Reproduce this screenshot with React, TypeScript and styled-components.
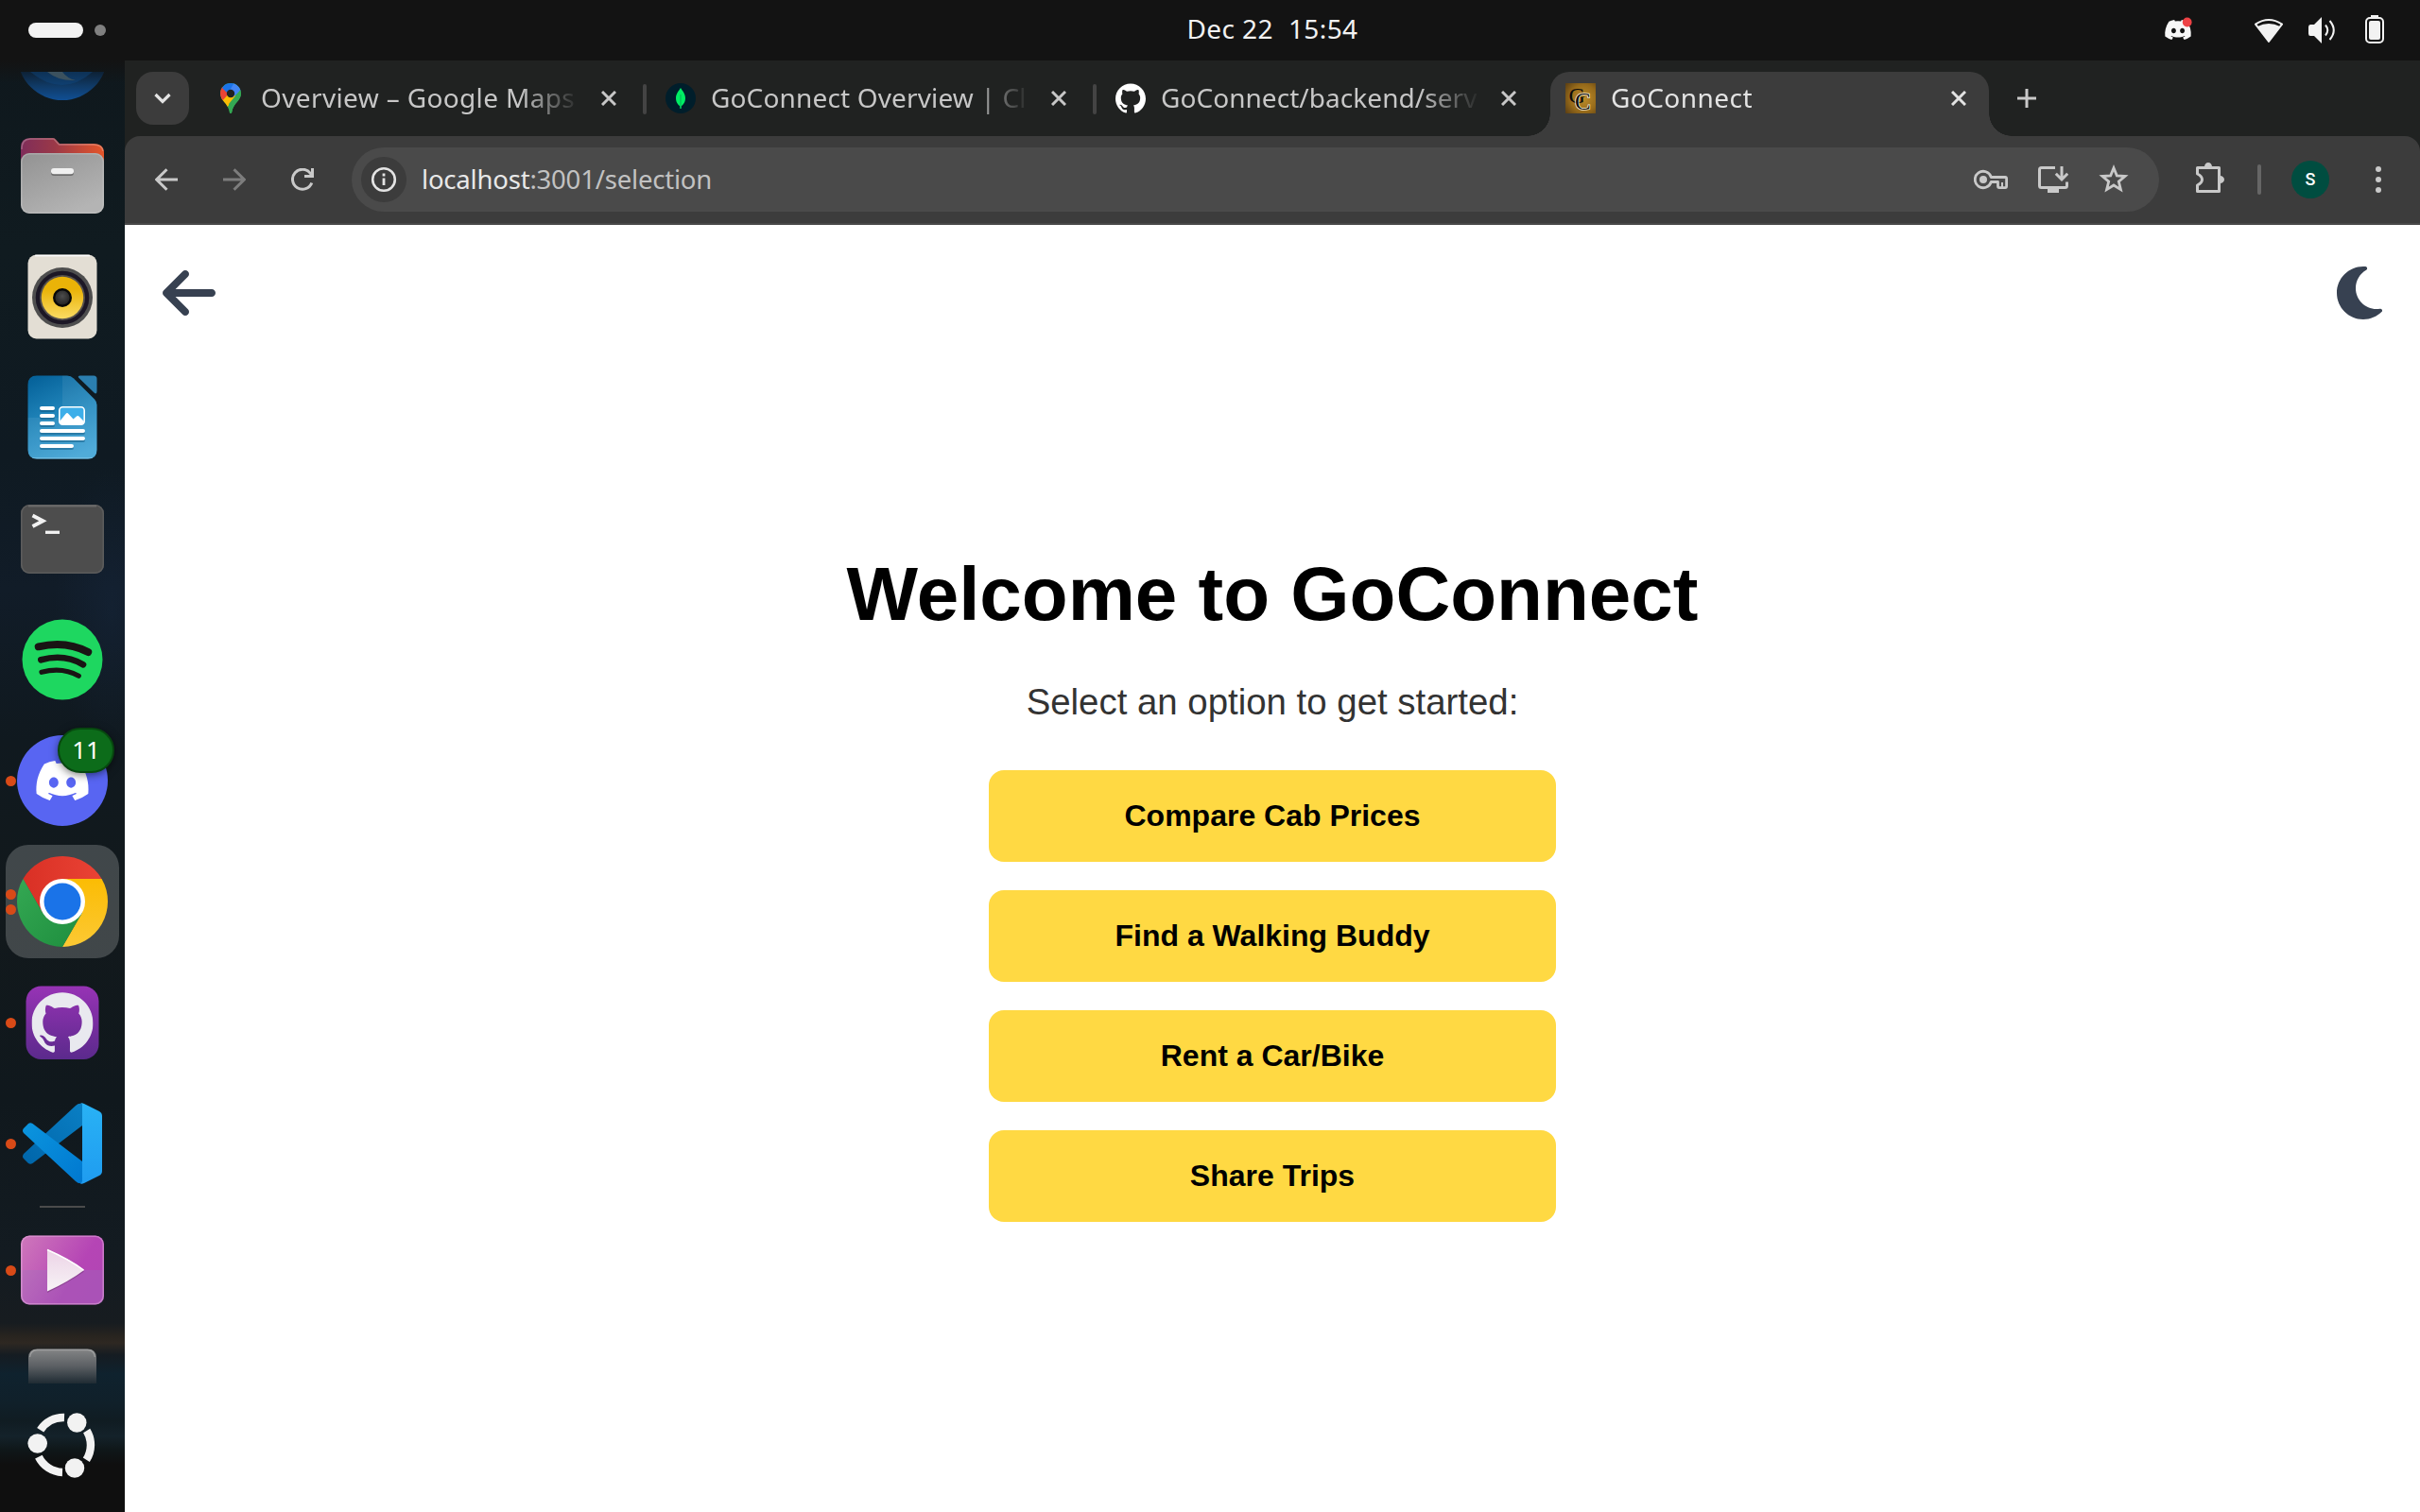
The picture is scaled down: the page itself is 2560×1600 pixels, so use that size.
import React from "react";
import styled, { createGlobalStyle, css } from "styled-components";
import { SiGithub } from "react-icons/si";
import { FaArrowLeft, FaDiscord, FaMoon } from "react-icons/fa6";

const GlobalStyle = createGlobalStyle`
  * { box-sizing: border-box; }
  html, body { margin: 0; padding: 0; background: #131313; }
  svg { display: block; flex: none; }
`;

const uiFont = `"Noto Sans", "Open Sans", sans-serif`;

const Desktop = styled.div`
  width: 2560px;
  height: 1600px;
  display: flex;
  flex-direction: column;
  overflow: hidden;
  font-family: ${uiFont};
`;

/* ---------- system bar ---------- */

const TopBar = styled.header`
  height: 64px;
  flex: none;
  display: grid;
  grid-template-columns: 1fr auto 1fr;
  align-items: center;
  background: #131313;
  color: #f2f2f2;
`;

const Workspaces = styled.div`
  display: flex;
  align-items: center;
  gap: 12px;
  padding-left: 30px;
`;

const WorkspaceMark = styled.span<{ $active?: boolean }>`
  width: ${(p) => (p.$active ? 58 : 12)}px;
  height: ${(p) => (p.$active ? 16 : 12)}px;
  border-radius: 8px;
  background: ${(p) => (p.$active ? "#f2f2f2" : "#808080")};
`;

const Clock = styled.time`
  display: flex;
  gap: 16px;
  padding: 0 0 4px 132px;
  font-size: 28px;
  line-height: 40px;
  letter-spacing: 0.4px;
`;

const Tray = styled.div`
  display: flex;
  justify-content: flex-end;
  align-items: center;
  padding-right: 38px;
`;

const TraySlot = styled.span<{ $gap: number }>`
  display: block;
  margin-left: ${(p) => p.$gap}px;
`;

/* ---------- dock ---------- */

const Workspace = styled.div`
  flex: 1;
  display: flex;
  min-height: 0;
`;

const Dock = styled.nav`
  width: 132px;
  flex: none;
  display: flex;
  flex-direction: column;
  padding-top: 12px;
  background:
    linear-gradient(180deg, #131313 0, rgba(17, 20, 22, 0) 24px),
    radial-gradient(60px 150px at 118px 580px, rgba(24, 42, 68, 0.35), rgba(24, 42, 68, 0)),
    linear-gradient(
      180deg,
      #0f181d 0,
      #101b20 200px,
      #0f1a22 420px,
      #111c28 560px,
      #10191f 720px,
      #12191c 900px,
      #10181d 1100px,
      #131b21 1260px,
      #171c20 1336px,
      #28241f 1350px,
      #2e2822 1357px,
      #151c22 1370px,
      #0f222e 1390px,
      #10202a 1420px,
      #101c22 1440px,
      #14222a 1456px,
      #0f1719 1470px,
      #0f0f0f 1486px,
      #0f0f0f 1536px
    );
`;

const DockScroll = styled.div`
  height: 1388px;
  flex: none;
  overflow: hidden;
`;

const DockList = styled.div`
  display: flex;
  flex-direction: column;
  margin-top: -82px;
`;

const DockCell = styled.div<{ $focused?: boolean }>`
  position: relative;
  height: 128px;
  flex: none;
  padding: 4px 6px;
  ${(p) =>
    p.$focused &&
    css`
      &::before {
        content: "";
        display: block;
        height: 120px;
        border-radius: 24px;
        background: rgba(255, 255, 255, 0.2);
      }
    `}
  > svg {
    position: absolute;
    left: 0;
    top: 0;
  }
`;

const RunningDots = styled.div`
  position: absolute;
  left: 6px;
  top: 0;
  height: 128px;
  display: flex;
  flex-direction: column;
  justify-content: center;
  gap: 5px;
`;

const Dot = styled.span`
  width: 11px;
  height: 11px;
  border-radius: 50%;
  background: #d84a17;
`;

const Badge = styled.span`
  position: absolute;
  left: 61px;
  top: 8px;
  width: 60px;
  height: 48px;
  display: flex;
  align-items: center;
  justify-content: center;
  padding-bottom: 2px;
  border: 2px solid #07480f;
  border-radius: 24px;
  background: #0c6c1a;
  box-shadow: 0 2px 8px rgba(0, 0, 0, 0.5);
  color: #fff;
  font-size: 26px;
  line-height: 30px;
`;

const DockDivider = styled.div`
  height: 6px;
  flex: none;
  padding: 2px 42px;
  &::before {
    content: "";
    display: block;
    height: 2px;
    background: #4a4b4b;
  }
`;

const AppsButton = styled.div`
  flex: 1;
`;

/* ---------- browser ---------- */

const Browser = styled.section`
  flex: 1;
  min-width: 0;
  display: flex;
  flex-direction: column;
  background: #202221;
`;

const TabStrip = styled.div`
  height: 80px;
  flex: none;
  display: flex;
  align-items: flex-start;
  padding: 12px 0 0 12px;
`;

const TabSearch = styled.button`
  width: 56px;
  height: 56px;
  margin: 0 12px 0 0;
  padding: 0;
  border: 0;
  border-radius: 18px;
  background: #3c3c3c;
  display: flex;
  align-items: center;
  justify-content: center;
`;

const Tab = styled.div<{ $active?: boolean }>`
  position: relative;
  width: 464px;
  height: 68px;
  margin-right: 12px;
  padding: 0 8px 12px 16px;
  display: flex;
  align-items: center;
  color: ${(p) => (p.$active ? "#e3e3e3" : "#c7c7c7")};
  ${(p) =>
    p.$active &&
    css`
      background: #3c3c3c;
      border-radius: 20px 20px 0 0;
      &::before,
      &::after {
        content: "";
        position: absolute;
        bottom: 0;
        width: 24px;
        height: 24px;
      }
      &::before {
        left: -24px;
        background: radial-gradient(circle at 0 0, transparent 23.5px, #3c3c3c 24px);
      }
      &::after {
        right: -24px;
        background: radial-gradient(circle at 100% 0, transparent 23.5px, #3c3c3c 24px);
      }
    `}
`;

const TabTitle = styled.span<{ $tracking: number }>`
  width: 334px;
  margin: 0 10px 0 16px;
  padding-bottom: 2px;
  overflow: hidden;
  white-space: nowrap;
  font-size: 28px;
  line-height: 40px;
  letter-spacing: ${(p) => p.$tracking}px;
  mask-image: linear-gradient(90deg, #000 274px, transparent 338px);
`;

const CloseSlot = styled.span`
  width: 48px;
  display: flex;
  justify-content: center;
`;

const TabRule = styled.span`
  position: absolute;
  left: 468px;
  top: 13px;
  width: 4px;
  height: 32px;
  border-radius: 2px;
  background: #444;
`;

const NewTab = styled.span`
  width: 56px;
  height: 56px;
  display: flex;
  align-items: center;
  justify-content: center;
`;

const Toolbar = styled.div`
  height: 94px;
  flex: none;
  display: flex;
  align-items: center;
  padding: 0 0 0 20px;
  background: #3c3c3c;
  border-bottom: 2px solid #484848;
  border-radius: 16px 16px 0 0;
`;

const NavSlot = styled.span<{ $dim?: boolean }>`
  width: 48px;
  margin-right: 24px;
  display: flex;
  justify-content: center;
  color: ${(p) => (p.$dim ? "#7d7d7d" : "#c9c9c9")};
`;

const Omnibox = styled.div`
  width: 1912px;
  height: 68px;
  margin: 0 36px 0 4px;
  display: flex;
  align-items: center;
  border-radius: 34px;
  padding: 0 32px 0 10px;
  background: #4a4a4a;
`;

const InfoChip = styled.span`
  width: 48px;
  height: 48px;
  border-radius: 50%;
  display: flex;
  align-items: center;
  justify-content: center;
  background: #3c3c3c;
`;

const Address = styled.span`
  flex: 1;
  margin-left: 16px;
  padding-bottom: 1px;
  font-size: 27.5px;
  line-height: 40px;
  letter-spacing: -0.2px;
  color: #c2c2c2;
`;

const Host = styled.span`
  color: #e8e8e8;
`;

const OmniActions = styled.div`
  display: grid;
  grid-template-columns: 36px 32px 32px;
  align-items: center;
  column-gap: 32px;
`;

const ToolbarRule = styled.span`
  width: 4px;
  height: 32px;
  margin: 0 32px 0 32px;
  border-radius: 2px;
  background: #666;
`;

const Avatar = styled.span`
  width: 40px;
  height: 40px;
  border-radius: 50%;
  display: flex;
  align-items: center;
  justify-content: center;
  background: #004d40;
  color: #fff;
  font: 500 18px/20px Roboto, sans-serif;
`;

const MenuDots = styled.span`
  width: 6px;
  margin-left: 49px;
  display: flex;
  flex-direction: column;
  gap: 5px;
  &::before,
  &::after,
  i {
    content: "";
    width: 6px;
    height: 6px;
    border-radius: 50%;
    background: #c9c9c9;
  }
`;

/* ---------- page ---------- */

const Page = styled.main`
  flex: 1;
  display: flex;
  flex-direction: column;
  background: #fff;
  font-family: "Liberation Sans", Arial, sans-serif;
`;

const PageHeader = styled.div`
  display: flex;
  justify-content: space-between;
  padding: 40px 40px 0;
  color: #374151;
`;

const BackArrow = styled(FaArrowLeft)`
  width: 56px;
  height: 64px;
`;

const Moon = styled(FaMoon)`
  width: 48px;
  height: 64px;
`;

const Welcome = styled.div`
  display: flex;
  flex-direction: column;
  align-items: center;
  padding-top: 241px;
`;

const Heading = styled.h1`
  margin: 0;
  font-size: 80px;
  line-height: 92px;
  font-weight: 700;
  color: #000;
`;

const Prompt = styled.p`
  margin: 46px 0 0;
  font-size: 38.4px;
  line-height: 44px;
  color: #333;
`;

const Options = styled.div`
  width: 600px;
  display: flex;
  flex-direction: column;
  gap: 30px;
  margin-top: 50px;
`;

const Option = styled.button`
  height: 97px;
  padding: 0;
  border: 0;
  border-radius: 16px;
  background: #ffd943;
  color: #000;
  font: 700 32px/37px "Liberation Sans", Arial, sans-serif;
`;

/* ---------- icons ---------- */

const CloseIcon = () => (
  <svg width="16" height="16" viewBox="0 0 16 16" stroke="currentColor" strokeWidth="3">
    <path d="M1 1l14 14M15 1L1 15" />
  </svg>
);

const MapsIcon = () => (
  <svg width="32" height="32" viewBox="0 0 32 32">
    <defs>
      <clipPath id="pin">
        <path d="M16 0c6.200 0 11 4.800 11 11 0 7.500-8.200 9.800-9.700 19.500-.3 2-2.300 2-2.600 0C13.200 20.800 5 18.500 5 11 5 4.800 9.800 0 16 0z" />
      </clipPath>
    </defs>
    <g clipPath="url(#pin)">
      <path fill="#34a853" d="M0 0h32v32H0z" />
      <path fill="#fbbc04" d="M0 22L13 6l9 8L10 28z" />
      <path fill="#ea4335" d="M0 4h8l7 6-9 10-6-4z" />
      <path fill="#1a73e8" d="M7 5L12-2l9 2-8 11z" />
      <path fill="#4285f4" d="M19.500 0L28 5l-2 4-8 6-5-4z" />
      <path fill="#34a853" d="M26.300 7L30 20 16 32 14 22z" />
    </g>
    <circle cx="16" cy="11" r="4.200" fill="#202221" />
  </svg>
);

const MongoIcon = () => (
  <svg width="32" height="32" viewBox="0 0 32 32">
    <circle cx="16" cy="16" r="16" fill="#001e2b" />
    <path fill="#00ed64" d="M16 5c1.500 3 5 5.500 5 11 0 4.500-2.500 7-4.200 8.300L16.600 27h-1.200l-.2-2.700C13.500 23 11 20.500 11 16c0-5.500 3.500-8 5-11z" />
    <path stroke="#00a651" strokeWidth=".8" d="M16 12v14" />
  </svg>
);

const GoConnectIcon = () => (
  <svg width="32" height="32" viewBox="0 0 32 32">
    <defs>
      <radialGradient id="gold" cx=".6" cy=".5" r=".75">
        <stop offset="0" stopColor="#bd8d2b" />
        <stop offset=".6" stopColor="#966a1a" />
        <stop offset="1" stopColor="#5e4114" />
      </radialGradient>
    </defs>
    <path fill="url(#gold)" d="M0 0h32v32H0z" />
    <text fontFamily="Liberation Serif, serif" fill="#0b0b0b" paintOrder="stroke">
      <tspan x="3.500" y="20.500" fontSize="24">G</tspan>
      <tspan x="10" y="28" fontSize="25" stroke="#f6ecd6" strokeWidth="1.600">C</tspan>
    </text>
  </svg>
);

const ArrowIcon = ({ flip }: { flip?: boolean }) => (
  <svg width="24" height="24" viewBox="0 0 24 24" fill="none" stroke="currentColor" strokeWidth="3">
    <path d={flip ? "M0 12h22M11.500 1.200L22.300 12 11.500 22.800" : "M24 12H2M12.500 1.200L1.700 12l10.800 10.800"} />
  </svg>
);

const ReloadIcon = () => (
  <svg width="24" height="24" viewBox="0 0 24 24" fill="none" stroke="currentColor" strokeWidth="3">
    <path d="M21.800 15.500A10.500 10.500 0 1 1 20.300 5.300L22 7.500" />
    <path d="M22.500 0v8.500H14" />
  </svg>
);

const InfoIcon = () => (
  <svg width="28" height="28" viewBox="0 0 28 28" fill="none" stroke="#e3e3e3">
    <circle cx="14" cy="14" r="11.800" strokeWidth="2.600" />
    <path strokeWidth="2.800" d="M14 12.500V20M14 7.600v2.800" />
  </svg>
);

const KeyIcon = () => (
  <svg width="36" height="32" viewBox="2 0 36 32" fill="none" stroke="#c9c9c9" strokeWidth="2.800">
    <path strokeLinejoin="round" d="M20.300 13.500A8.700 8.700 0 1 0 20.300 18.500H27.500V23Q27.500 24.600 29 24.600H35.200Q36.600 24.600 36.600 23V15Q36.600 13.500 35.200 13.500Z" />
    <circle cx="12" cy="16" r="4" fill="#c9c9c9" stroke="none" />
    <path strokeWidth="2" d="M32 19v5" />
  </svg>
);

const InstallIcon = () => (
  <svg width="32" height="32" viewBox="0 0 32 32" fill="none" stroke="#c9c9c9" strokeWidth="3">
    <path d="M18 3.500H3.500Q1.500 3.500 1.500 5.500V22.500Q1.500 24.500 3.500 24.500H28.500Q30.500 24.500 30.500 22.500V18.500" />
    <path d="M10 26h12v4H10z" fill="#c9c9c9" stroke="none" />
    <path d="M25 2v13M18.800 9.800L25 16l6.200-6.200" />
  </svg>
);

const StarIcon = () => (
  <svg width="32" height="32" viewBox="0 0 32 32" fill="none" stroke="#c9c9c9" strokeWidth="2.800">
    <path d="M16 3.800l3.300 8.100 8.700.6-6.700 5.600 2.100 8.500L16 22l-7.400 4.600 2.100-8.500L4 12.500l8.700-.6z" />
  </svg>
);

const PuzzleIcon = () => (
  <svg width="36" height="36" viewBox="0 0 36 36" fill="none" stroke="#c9c9c9" strokeWidth="3">
    <path strokeLinejoin="round" d="M4.500 5.500H27.500V30.500H4.500V24Q9.500 21.500 9.500 18T4.500 12Z" />
    <path fill="#c9c9c9" stroke="none" d="M12 4.500a4 4.500 0 0 1 8 0zM28.500 14a4.500 4 0 0 1 0 8z" />
  </svg>
);

const TrayDiscord = () => (
  <svg width="34" height="32" viewBox="0 0 34 32">
    <FaDiscord x={2} y={0.5} size={30} color="#f7f7f7" />
    <circle cx="26.700" cy="7.500" r="4.900" fill="#ed4245" />
  </svg>
);

const WifiIcon = () => (
  <svg width="32" height="32" viewBox="0 0 32 32">
    <path fill="none" stroke="#f2f2f2" strokeWidth="2" strokeLinejoin="round" d="M16 28L2 9.700Q16 .5 30 9.700Z" />
    <path fill="#f2f2f2" d="M16 28.500L4 12Q16 6 28 12Z" />
  </svg>
);

const VolumeIcon = () => (
  <svg width="32" height="32" viewBox="0 0 32 32">
    <path fill="#f2f2f2" d="M4 10h4l8-8v28l-8-8H4q-2 0-2-2.500v-7Q2 10 4 10z" />
    <path fill="none" stroke="#f2f2f2" strokeWidth="2" d="M20 10.500q4.500 5.500 0 11M24.500 6q8.500 10 0 20" />
  </svg>
);

const BatteryIcon = () => (
  <svg width="20" height="32" viewBox="0 0 20 32">
    <path fill="#f2f2f2" d="M6 0h8v3H6z" />
    <rect x="1" y="3" width="18" height="26" rx="4" fill="none" stroke="#f2f2f2" strokeWidth="2" />
    <rect x="4" y="6" width="12" height="20" rx="2" fill="#f2f2f2" />
  </svg>
);

const Art = ({ children }: { children: React.ReactNode }) => (
  <svg width="132" height="128" viewBox="0 0 132 128">
    {children}
  </svg>
);

const Thunderbird = () => (
  <Art>
    <defs>
      <linearGradient id="tb" x1="0" y1="82" x2="0" y2="112" gradientUnits="userSpaceOnUse">
        <stop offset="0" stopColor="#0d2135" />
        <stop offset=".5" stopColor="#103a66" />
        <stop offset="1" stopColor="#104f94" />
      </linearGradient>
    </defs>
    <circle cx="66" cy="64.500" r="47.500" fill="url(#tb)" />
    <path fill="#0e4c86" opacity=".4" d="M32 82q34 28 66 0z" />
    <path fill="#3b515e" d="M50 82q12 10 30 9-9-2-14-9z" />
  </Art>
);

const Files = () => (
  <Art>
    <defs>
      <linearGradient id="fb" x1="0" x2="1">
        <stop offset="0" stopColor="#7f2d5a" />
        <stop offset=".4" stopColor="#9a3848" />
        <stop offset="1" stopColor="#e5562a" />
      </linearGradient>
      <linearGradient id="ff" x1="0" y1="0" x2=".6" y2="1">
        <stop offset="0" stopColor="#929292" />
        <stop offset="1" stopColor="#b4b4b4" />
      </linearGradient>
    </defs>
    <path fill="url(#fb)" d="M22 60V34q0-10 10-10h24q2 0 3 1.500l4 4.500h36q11 0 11 10v20z" />
    <path fill="none" stroke="#fff" strokeOpacity=".25" strokeWidth="1.500" d="M23 36q0-11 9-11h25l5.500 6H99q9 0 10 7" />
    <rect x="22" y="40" width="88" height="64" rx="9" fill="url(#ff)" />
    <rect x="22.800" y="40.800" width="86.400" height="62.400" rx="8.500" fill="none" stroke="#d0d0d0" strokeOpacity=".35" strokeWidth="1.500" />
    <rect x="54" y="58" width="24" height="6" rx="3" fill="#6d6d6d" />
    <rect x="54" y="56" width="24" height="6.300" rx="3" fill="#f0f0f0" />
  </Art>
);

const Rhythmbox = () => (
  <Art>
    <defs>
      <linearGradient id="cone" x1="0" y1="0" x2="0" y2="1">
        <stop offset=".3" stopColor="#eab308" />
        <stop offset="1" stopColor="#fadb62" />
      </linearGradient>
      <radialGradient id="cap" cx=".5" cy=".4" r=".6">
        <stop offset="0" stopColor="#4d4d4d" />
        <stop offset="1" stopColor="#232323" />
      </radialGradient>
    </defs>
    <rect x="29.500" y="19.500" width="73" height="89" rx="9" fill="#e3ded4" />
    <path stroke="#fff" strokeWidth="1.500" d="M37 20.500h58" />
    <circle cx="66" cy="65" r="32" fill="#4e4e4e" />
    <circle cx="66" cy="65" r="28.300" fill="#1c1725" />
    <circle cx="66" cy="65" r="24" fill="#55514e" />
    <circle cx="66" cy="65" r="22.200" fill="url(#cone)" />
    <circle cx="66" cy="65" r="10" fill="#080808" />
    <circle cx="66" cy="65" r="7.600" fill="url(#cap)" />
  </Art>
);

const Writer = () => (
  <Art>
    <defs>
      <linearGradient id="wr" x1=".2" y1="0" x2=".6" y2="1">
        <stop offset="0" stopColor="#06639b" />
        <stop offset=".5" stopColor="#2388bd" />
        <stop offset="1" stopColor="#43a5d6" />
      </linearGradient>
      <clipPath id="wc">
        <path d="M39 19.500h32q4 0 7 3l22 22q2.500 2.500 2.500 6V98q0 9.500-9.500 9.500H39q-9.500 0-9.500-9.500V29q0-9.500 9.500-9.500z" />
      </clipPath>
    </defs>
    <g clipPath="url(#wc)">
      <path fill="url(#wr)" d="M29 19h74v90H29z" />
      <path fill="#fff" opacity=".07" d="M66 19h37v90H66zM29 64h74v45H29z" />
      <path stroke="#7cc6ea" strokeWidth="2" opacity=".7" d="M34 107h64" />
    </g>
    <path fill="#2b7fb0" d="M85 19.500h14q3.500 0 3.500 3.500v13q0 4-3 1.500L83.500 22q-2-2.500 1.500-2.500z" />
    <path fill="none" stroke="#0b4f77" strokeOpacity=".45" strokeWidth="4" strokeLinecap="round" d="M44 56h12M44 64h12M44 72h12M44 80h44M44 88h44M44 96h32" />
    <path fill="none" stroke="#fff" strokeWidth="4" strokeLinecap="round" d="M44 54h12M44 62h12M44 70h12M44 78h44M44 86h44M44 94h32" />
    <rect x="62.800" y="52.800" width="26.400" height="18.400" rx="3.500" fill="#3daee9" stroke="#fff" strokeWidth="1.600" />
    <path fill="#fff" d="M63 68l6.500-8q1.500-2 3 0l5 5.500 3.500-3q1.500-1 3 .5l5 5v3H63z" />
  </Art>
);

const Terminal = () => (
  <Art>
    <rect x="22" y="28" width="88" height="73" rx="9" fill="#4d4d4d" />
    <rect x="22.800" y="28.800" width="86.400" height="71.400" rx="8.500" fill="none" stroke="#5c5c5c" strokeWidth="1.600" />
    <path stroke="#6a6a6a" strokeWidth="2" d="M30 29.500h72" />
    <path fill="none" stroke="#f2f2f2" strokeWidth="3.800" d="M34.500 39.500L45.500 45.200 34.500 51" />
    <path stroke="#f2f2f2" strokeWidth="3.300" d="M48 57.300h15" />
  </Art>
);

const Spotify = () => (
  <Art>
    <circle cx="66" cy="64" r="42.500" fill="#1ed760" />
    <g fill="none" stroke="#191414" strokeLinecap="round">
      <path strokeWidth="8" d="M40.700 50.300Q70 43.500 93.200 56" />
      <path strokeWidth="6.600" d="M43.300 64.300Q68 57.500 88 69.300" />
      <path strokeWidth="5.200" d="M44 77.300Q66 71.500 83.300 81.300" />
    </g>
  </Art>
);

const Discord = () => (
  <Art>
    <circle cx="66" cy="64" r="48" fill="#5865f2" />
    <FaDiscord x={36} y={34} size={60} color="#fff" />
  </Art>
);

const Chrome = () => (
  <Art>
    <defs>
      <linearGradient id="cr" x1="0" x2="1">
        <stop offset="0" stopColor="#d93025" />
        <stop offset="1" stopColor="#ea4335" />
      </linearGradient>
      <linearGradient id="cy" x1=".5" y1="1" x2=".5" y2="0">
        <stop offset="0" stopColor="#fcc934" />
        <stop offset="1" stopColor="#fbbc04" />
      </linearGradient>
      <linearGradient id="cg" x1="0" y1="0" x2="1" y2="1">
        <stop offset="0" stopColor="#34a853" />
        <stop offset="1" stopColor="#1e8e3e" />
      </linearGradient>
    </defs>
    <path fill="url(#cr)" d="M24.430 40A48 48 0 0 1 107.570 40H66L45.200 76z" />
    <path fill="url(#cy)" d="M107.570 40A48 48 0 0 1 66 112L86.800 76 66 40z" />
    <path fill="url(#cg)" d="M66 112A48 48 0 0 1 24.430 40L45.200 76l41.600 0z" />
    <circle cx="66" cy="64" r="24" fill="#fff" />
    <circle cx="66" cy="64" r="19.500" fill="#1a73e8" />
  </Art>
);

const GithubDesktop = () => (
  <Art>
    <defs>
      <linearGradient id="gd" x1="0" y1="0" x2="0" y2="1">
        <stop offset="0" stopColor="#9733b5" />
        <stop offset="1" stopColor="#5b2a8c" />
      </linearGradient>
    </defs>
    <rect x="27.500" y="25.500" width="77" height="77.500" rx="16" fill="url(#gd)" />
    <SiGithub x={33.5} y={31.5} size={65} color="#e9e9ef" />
  </Art>
);

const VSCode = () => (
  <Art>
    <defs>
      <linearGradient id="v1" x1="1" y1="0" x2="0" y2="1">
        <stop offset="0" stopColor="#0a7fc4" />
        <stop offset="1" stopColor="#0065a9" />
      </linearGradient>
      <linearGradient id="v2" x1="0" y1="0" x2="1" y2="1">
        <stop offset="0" stopColor="#0b95de" />
        <stop offset="1" stopColor="#0078d0" />
      </linearGradient>
      <linearGradient id="v3" x1="0" y1="0" x2="0" y2="1">
        <stop offset="0" stopColor="#29b2f5" />
        <stop offset="1" stopColor="#1f9cf0" />
      </linearGradient>
    </defs>
    <path fill="url(#v1)" d="M25 80q-2-2 0-5L80 24q3-3 7-2v23L34.500 85q-2.500 1.500-4.500 0z" />
    <path fill="url(#v2)" d="M25 48q-2 2.500 0 5l55 51q3 3 7 2V83L34.500 43q-2.500-1.500-4.500 0z" />
    <path fill="url(#v3)" d="M87 105.500V22.500q-1-1-2-1 2-.5 4 .5l16 8q3 1.500 3 5v58q0 3.500-3 5l-16 8q-2 1-4 .5 2-1 2-3z" />
  </Art>
);

const Videos = () => (
  <Art>
    <defs>
      <linearGradient id="vd" x1="0" y1="0" x2="1" y2=".5">
        <stop offset="0" stopColor="#cf78bb" />
        <stop offset=".75" stopColor="#b545b5" />
        <stop offset="1" stopColor="#b345b4" />
      </linearGradient>
      <linearGradient id="vp" x1="0" y1="0" x2="0" y2="1">
        <stop offset="0" stopColor="#ecd3e6" />
        <stop offset="1" stopColor="#f7f3f6" />
      </linearGradient>
    </defs>
    <rect x="22" y="27.500" width="88" height="73" rx="9" fill="url(#vd)" />
    <path fill="#8f7cc0" opacity=".25" d="M22 64h88v27.500q0 9-9 9H31q-9 0-9-9z" />
    <rect x="22.800" y="28.300" width="86.400" height="71.400" rx="8.500" fill="none" stroke="#e5a9dd" strokeOpacity=".5" strokeWidth="1.600" />
    <path fill="#6d2f70" opacity=".5" d="M50 43.500Q73 54 89 65.500 73 77 50 88z" />
    <path fill="url(#vp)" d="M50 42Q73 52 89 64 73 76 50 86.500z" />
    <path fill="none" stroke="#fff" strokeWidth="1.500" d="M50 42.500Q73 52.500 88.500 64" />
  </Art>
);

const DriveFading = () => (
  <Art>
    <defs>
      <linearGradient id="df" x1="0" y1="19" x2="0" y2="56" gradientUnits="userSpaceOnUse">
        <stop offset="0" stopColor="#858687" />
        <stop offset=".5" stopColor="#5c6064" />
        <stop offset="1" stopColor="#1f2b33" />
      </linearGradient>
    </defs>
    <path fill="url(#df)" d="M30 56V29q0-9.500 9.500-9.500h53q9.500 0 9.500 9.500v27z" />
    <path fill="none" stroke="#b0b0b0" strokeOpacity=".6" strokeWidth="1.500" d="M31.500 28q1-7.500 8-7.500h53q7 0 8 7.500" />
  </Art>
);

const UbuntuLogo = () => (
  <svg width="132" height="136" viewBox="0 0 132 136">
    <g fill="none" stroke="#f2f2f2" strokeWidth="8.400">
      <path d="M42.700 49.200A29 29 0 0 1 68 36" />
      <path d="M91.700 50A29 29 0 0 1 91.300 80.800" />
      <path d="M66 94A29 29 0 0 1 40.900 77.700" />
    </g>
    <g fill="#f2f2f2">
      <circle cx="39.700" cy="63.500" r="10.300" />
      <circle cx="81.300" cy="41.500" r="10.200" />
      <circle cx="79" cy="89.500" r="10.200" />
    </g>
  </svg>
);

const dockApps: { name: string; Icon: React.FC; running?: number; badge?: string; focused?: boolean }[] = [
  { name: "mail", Icon: Thunderbird },
  { name: "files", Icon: Files },
  { name: "music", Icon: Rhythmbox },
  { name: "writer", Icon: Writer },
  { name: "terminal", Icon: Terminal },
  { name: "spotify", Icon: Spotify },
  { name: "discord", Icon: Discord, running: 1, badge: "11" },
  { name: "chrome", Icon: Chrome, running: 2, focused: true },
  { name: "github", Icon: GithubDesktop, running: 1 },
  { name: "code", Icon: VSCode, running: 1 },
];

const DockItem = ({ Icon, running = 0, badge, focused }: Omit<(typeof dockApps)[number], "name">) => (
  <DockCell $focused={focused}>
    <Icon />
    {running > 0 && (
      <RunningDots>
        {Array.from({ length: running }, (_, i) => (
          <Dot key={i} />
        ))}
      </RunningDots>
    )}
    {badge && <Badge>{badge}</Badge>}
  </DockCell>
);

const tabs = [
  { title: "Overview – Google Maps", icon: <MapsIcon />, rule: true, tracking: 0.36 },
  { title: "GoConnect Overview | Cl", icon: <MongoIcon />, rule: true, tracking: 0.15 },
  { title: "GoConnect/backend/serv", icon: <SiGithub size={32} color="#fff" />, rule: false, tracking: 0.05 },
  { title: "GoConnect", icon: <GoConnectIcon />, rule: false, active: true, tracking: 0.45 },
];

const options = ["Compare Cab Prices", "Find a Walking Buddy", "Rent a Car/Bike", "Share Trips"];

export default function App() {
  return (
    <Desktop>
      <GlobalStyle />
      <TopBar>
        <Workspaces>
          <WorkspaceMark $active />
          <WorkspaceMark />
        </Workspaces>
        <Clock>
          <span>Dec 22</span>
          <span>15:54</span>
        </Clock>
        <Tray>
          <TraySlot $gap={0}><TrayDiscord /></TraySlot>
          <TraySlot $gap={63}><WifiIcon /></TraySlot>
          <TraySlot $gap={24}><VolumeIcon /></TraySlot>
          <TraySlot $gap={30}><BatteryIcon /></TraySlot>
        </Tray>
      </TopBar>
      <Workspace>
        <Dock>
          <DockScroll>
            <DockList>
              {dockApps.map(({ name, ...app }) => (
                <DockItem key={name} {...app} />
              ))}
              <DockDivider />
              <DockItem Icon={Videos} running={1} />
              <DockItem Icon={DriveFading} />
            </DockList>
          </DockScroll>
          <AppsButton>
            <UbuntuLogo />
          </AppsButton>
        </Dock>
        <Browser>
          <TabStrip>
            <TabSearch>
              <svg width="20" height="20" viewBox="0 0 20 20" fill="none" stroke="#e3e3e3" strokeWidth="3.200">
                <path d="M2.500 6l7.500 7.500L17.500 6" />
              </svg>
            </TabSearch>
            {tabs.map((tab) => (
              <Tab key={tab.title} $active={tab.active}>
                {tab.icon}
                <TabTitle $tracking={tab.tracking}>{tab.title}</TabTitle>
                <CloseSlot>
                  <CloseIcon />
                </CloseSlot>
                {tab.rule && <TabRule />}
              </Tab>
            ))}
            <NewTab>
              <svg width="20" height="20" viewBox="0 0 20 20" stroke="#c9c9c9" strokeWidth="3">
                <path d="M10 0v20M0 10h20" />
              </svg>
            </NewTab>
          </TabStrip>
          <Toolbar>
            <NavSlot><ArrowIcon /></NavSlot>
            <NavSlot $dim><ArrowIcon flip /></NavSlot>
            <NavSlot><ReloadIcon /></NavSlot>
            <Omnibox>
              <InfoChip><InfoIcon /></InfoChip>
              <Address>
                <Host>localhost</Host>:3001/selection
              </Address>
              <OmniActions>
                <KeyIcon />
                <InstallIcon />
                <StarIcon />
              </OmniActions>
            </Omnibox>
            <PuzzleIcon />
            <ToolbarRule />
            <Avatar>S</Avatar>
            <MenuDots><i /></MenuDots>
          </Toolbar>
          <Page>
            <PageHeader>
              <BackArrow />
              <Moon />
            </PageHeader>
            <Welcome>
              <Heading>Welcome to GoConnect</Heading>
              <Prompt>Select an option to get started:</Prompt>
              <Options>
                {options.map((label) => (
                  <Option key={label}>{label}</Option>
                ))}
              </Options>
            </Welcome>
          </Page>
        </Browser>
      </Workspace>
    </Desktop>
  );
}
